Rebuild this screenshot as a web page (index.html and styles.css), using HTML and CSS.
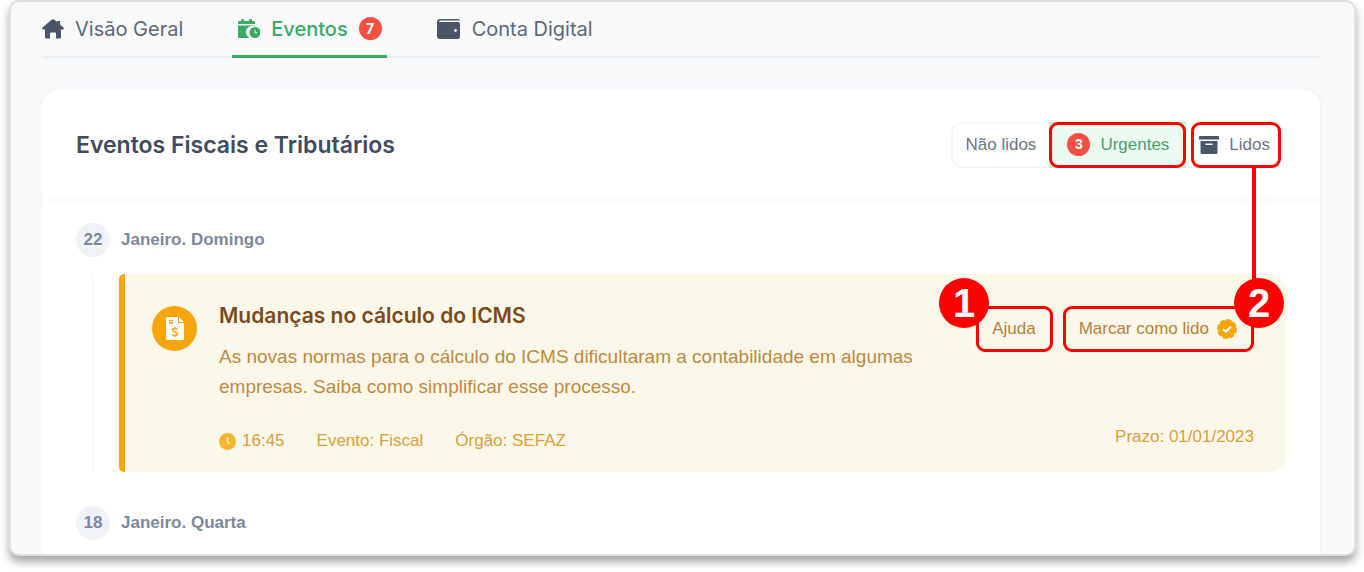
FILE: index.html
```html
<!DOCTYPE html>
<html lang="pt-br">
<head>
    <meta charset="UTF-8">
    <meta name="viewport" content="width=device-width, initial-scale=1.0">
    <title>Eventos Fiscais e Tributários</title>

    <link rel="stylesheet" href="styles.css">
</head>
<body>
    <div class="janela">
        <nav class="abas">
            <a class="aba" href="#geral">
                <svg width="22" height="20" viewBox="0 0 22 20"><path fill="currentColor" d="M9.500 .8q1.500-1.300 3 0L15 3V2h3v3.500l3.500 3q1 1.500-.5 2h-2V18q0 1.500-1.500 1.500H14v-5q0-1-1-1H9q-1 0-1 1v5H4.500Q3 19.500 3 18v-7.500H1q-1.500-.5-.5-2z"/></svg>
                Visão Geral
            </a>
            <a class="aba ativa" href="#eventos">
                <svg width="22" height="20" viewBox="0 0 22 20">
                    <path fill="currentColor" d="M0 5V3q0-1 1-1h2V1q0-1 1.500-1T6 1v1h5V1q0-1 1.500-1T14 1v1h2q1 0 1 1v2zM0 6.500h17v1A6.200 6.200 0 0 0 11.500 19H1q-1 0-1-1z"/>
                    <circle cx="17" cy="13.500" r="5.500" fill="currentColor"/>
                    <path fill="none" stroke="#f8fafc" stroke-width="1" d="M17 10.800v3h2.200"/>
                </svg>
                Eventos
                <span class="contador">7</span>
            </a>
            <a class="aba" href="#conta">
                <svg width="24" height="20" viewBox="0 0 24 20">
                    <path fill="currentColor" d="M3 0h18q2 0 2 1.500H3q-1 0-1 .8t1 .8h18q2 0 2 2V18q0 2-2 2H3q-3 0-3-3V3q0-3 3-3z"/>
                    <circle cx="18.500" cy="11.500" r="1.400" fill="#f8fafc"/>
                </svg>
                Conta Digital
            </a>
        </nav>

        <main class="painel">
            <header class="topo">
                <h1>Eventos Fiscais e Tributários</h1>
                <div class="filtros">
                    <button type="button" class="filtro">Não lidos</button>
                    <button type="button" class="filtro urgentes"><span class="contador">3</span>Urgentes</button>
                    <button type="button" class="filtro lidos">
                        <svg width="20" height="18" viewBox="0 0 20 18"><path fill="currentColor" d="M1 0h18q1 0 1 1v2.500H0V1q0-1 1-1zM1.500 5h17v11.500q0 1.500-1.500 1.500H3q-1.500 0-1.500-1.500zM6.500 7.500V9h7V7.500z"/></svg>
                        Lidos
                    </button>
                </div>
            </header>

            <section class="lista">
                <h2 class="dia"><span>22</span>Janeiro. Domingo</h2>
                <div class="linha">
                    <article class="evento">
                        <div class="icone">
                            <svg width="18" height="23" viewBox="0 0 18 23">
                                <path fill="#fff" d="M1.500 0H12v6h6v15.500q0 1.500-1.500 1.500h-15Q0 23 0 21.500v-20Q0 0 1.500 0zM13 0l5 5h-5z"/>
                                <path fill="none" stroke="#f7a50c" stroke-width="1.400" d="M3 3.500h4M3 6h4M11.500 12.500q-1-1-2.500-1-2.500 0-2.500 1.700 0 1.300 2.500 1.800t2.500 1.800q0 1.700-2.500 1.700-1.500 0-2.500-1M9 10v1.500m0 7V20"/>
                            </svg>
                        </div>
                        <div class="texto">
                            <h3>Mudanças no cálculo do ICMS</h3>
                            <p>As novas normas para o cálculo do ICMS dificultaram a contabilidade em algumas empresas. Saiba como simplificar esse processo.</p>
                            <div class="dados">
                                <span class="hora">
                                    <svg width="17" height="17" viewBox="0 0 17 17"><circle cx="8.500" cy="8.500" r="8.500" fill="#f6b52c"/><path fill="none" stroke="#fcf8e9" stroke-width="1.500" d="M8.500 4v5l2.500 2"/></svg>
                                    16:45
                                </span>
                                <span>Evento: Fiscal</span>
                                <span>Órgão: SEFAZ</span>
                            </div>
                        </div>
                        <div class="lateral">
                            <div class="acoes">
                                <button type="button" class="acao">Ajuda<b class="passo passo-um">1</b></button>
                                <button type="button" class="acao">
                                    Marcar como lido
                                    <svg width="20" height="20" viewBox="0 0 20 20">
                                        <circle cx="10" cy="10" r="9" fill="#f7a50c"/>
                                        <circle cx="10" cy="10" r="9" fill="none" stroke="#f7a50c" stroke-width="2" stroke-linecap="round" stroke-dasharray="3.500 3.570"/>
                                        <path fill="none" stroke="#fff" stroke-width="2" d="m6 10.200 2.800 2.400 5.200-4.800"/>
                                    </svg>
                                    <b class="passo passo-dois">2</b>
                                </button>
                            </div>
                            <span class="prazo">Prazo: 01/01/2023</span>
                        </div>
                    </article>
                </div>
                <h2 class="dia"><span>18</span>Janeiro. Quarta</h2>
            </section>
        </main>
    </div>
</body>
</html>
```
FILE: styles.css
```css
*{
    box-sizing: border-box;
}
body{
    margin: 0;
    min-height: 100vh;
    background-color: #fff;
    font-family: "Liberation Sans", Arial, sans-serif;
    color: #4a5568;
}
h1, h2, h3, p{
    margin: 0;
}
button{
    font-family: inherit;
    font-size: 17px;
    color: inherit;
    cursor: pointer;
}
svg{
    flex: none;
}
.janela{
    height: calc(100vh - 16px);
    margin: 0 8px 0 9px;
    padding: 0 34px 0 31px;
    overflow: hidden;
    border: 2px solid #dedfe0;
    border-radius: 10px;
    background-color: #f8fafc;
    box-shadow: 0 6px 8px rgba(0, 0, 0, 0.35);
}

/* abas */
.abas{
    display: flex;
    gap: 44px;
    height: 56px;
    border-bottom: 2px solid #e9f0f6;
}
.aba{
    display: flex;
    align-items: center;
    gap: 11px;
    height: 56px;
    padding: 0 5px 0 6px;
    border-bottom: 3px solid transparent;
    font-family: Inter, sans-serif;
    font-size: 20px;
    color: #5d6878;
    text-decoration: none;
}
.aba svg{
    color: #4a5568;
}
.aba:first-child{
    margin-left: -6px;
}
.ativa{
    color: #38ad61;
    font-weight: 500;
    border-color: #38ad61;
}
.ativa svg{
    color: #38ad61;
}
.contador{
    display: inline-block;
    width: 23px;
    height: 23px;
    border-radius: 50%;
    background-color: #f44f42;
    color: #fff;
    font-size: 14px;
    font-weight: bold;
    line-height: 23px;
    text-align: center;
}

/* painel */
.painel{
    margin-top: 32px;
    min-height: 100vh;
    border-radius: 16px;
    background-color: #fff;
    box-shadow: 0 0 4px #e9f0f6;
}
.topo{
    display: flex;
    justify-content: space-between;
    align-items: center;
    height: 111px;
    padding: 0 39px 0 34px;
    border-bottom: 2px solid #f7f9fb;
}
h1{
    font-family: Inter, sans-serif;
    font-size: 23px;
    font-weight: 600;
    color: #3f4b5e;
}
.filtros{
    display: flex;
}
.filtro{
    position: relative;
    display: flex;
    align-items: center;
    gap: 10px;
    height: 46px;
    padding: 0 13px;
    border: 2px solid #f4f6f9;
    background-color: #fff;
    color: #6b7686;
}
.filtro:first-child{
    border-right: 0;
    border-radius: 10px 0 0 10px;
}
.urgentes{
    padding: 0 15px 0 16px;
    border-color: #c2edd0;
    background-color: #ebfbf1;
    color: #4f9d6c;
}
.lidos{
    margin-left: 5px;
    padding: 0 9px 0 6px;
    border-color: transparent;
}
.lidos svg{
    color: #4a5568;
}

/* destaques vermelhos */
.urgentes::after, .lidos::after, .acao::after{
    content: "";
    position: absolute;
    inset: -2px;
    border: 3px solid #f00;
    border-radius: 9px;
}
.lidos::before{
    content: "";
    position: absolute;
    z-index: 1;
    top: 44px;
    right: 23px;
    width: 4px;
    height: 120px;
    background-color: #f00;
}
.passo{
    position: absolute;
    z-index: 2;
    top: -30px;
    width: 50px;
    height: 50px;
    border-radius: 50%;
    background-color: #f00;
    color: #fff;
    font-size: 40px;
    line-height: 50px;
    text-align: center;
}
.passo-um{
    left: -39px;
}
.passo-dois{
    right: -32px;
}

/* eventos */
.lista{
    padding: 22px 34px;
}
.dia{
    display: flex;
    align-items: center;
    gap: 11px;
    font-size: 17px;
    color: #7c899d;
}
.dia span{
    width: 34px;
    height: 34px;
    border-radius: 50%;
    background-color: #eff3f9;
    line-height: 34px;
    text-align: center;
}
.linha{
    margin: 17px 0 34px 16px;
    padding-left: 25px;
    border-left: 2px solid #f9fafb;
}
.evento{
    display: flex;
    min-height: 198px;
    padding: 32px 32px 21px 27px;
    border-left: 6px solid #f7a50c;
    border-radius: 5px 16px 16px 5px;
    background-color: #fcf8e9;
}
.icone{
    display: flex;
    flex: none;
    align-items: center;
    justify-content: center;
    width: 45px;
    height: 45px;
    margin-right: 22px;
    border-radius: 50%;
    background-color: #f7a50c;
}
.texto{
    max-width: 730px;
}
h3{
    font-family: Inter, sans-serif;
    font-size: 21px;
    line-height: 20px;
    font-weight: 600;
    color: #7b4a1e;
}
.texto p{
    margin-top: 16px;
    font-size: 19px;
    line-height: 30px;
    color: #bd8a42;
}
.dados{
    display: flex;
    gap: 32px;
    margin-top: 29px;
    font-size: 17px;
    line-height: 20px;
    color: #daa03c;
}
.hora{
    display: flex;
    align-items: center;
    gap: 6px;
}
.lateral{
    display: flex;
    flex: none;
    flex-direction: column;
    justify-content: space-between;
    align-items: flex-end;
    margin-left: auto;
}
.acoes{
    display: flex;
    gap: 10px;
}
.acao{
    position: relative;
    display: flex;
    align-items: center;
    gap: 8px;
    height: 46px;
    padding: 0 15px 0 14px;
    border: 2px solid #f8dc9a;
    border-radius: 9px;
    background-color: transparent;
    color: #b5803a;
}
.prazo{
    font-size: 17px;
    line-height: 28px;
    color: #daa03c;
}
```
